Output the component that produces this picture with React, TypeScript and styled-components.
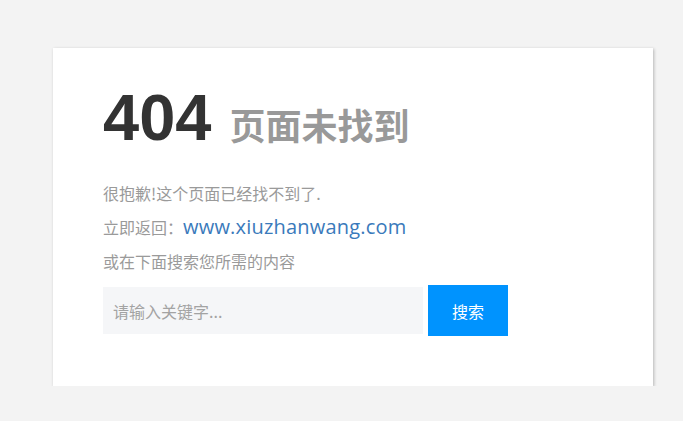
import React, { FC, useState } from "react";
import styled, { createGlobalStyle } from "styled-components";

const GlobalStyle = createGlobalStyle`
  html, body {
    margin: 0;
    padding: 0;
    background: #f3f3f3;
  }
  body {
    font-family: "Noto Sans CJK SC", "Liberation Sans", sans-serif;
  }
`;

const Page = styled.div`
  padding: 48px 0 0 53px;
`;

const Card = styled.div`
  width: 600px;
  height: 338px;
  box-sizing: border-box;
  padding: 38px 50px 0;
  background: #fff;
  box-shadow: 1px 1px 3px rgba(0, 0, 0, 0.25);
`;

const Heading = styled.h1`
  margin: 0;
  height: 64px;
  line-height: 64px;
  font-family: "Liberation Sans", Arial, sans-serif;
  font-size: 65px;
  font-weight: bold;
  color: #333;
  white-space: nowrap;
`;

const Sub = styled.small`
  font-family: "Noto Sans CJK SC", sans-serif;
  font-size: 36px;
  font-weight: bold;
  color: #999;
`;

const Lines = styled.div`
  margin-top: 26px;
`;

const Line = styled.p`
  margin: 0;
  height: 34px;
  line-height: 34px;
  font-size: 16px;
  color: #9a9a9a;
  white-space: nowrap;
`;

const Link = styled.a`
  font-family: "Open Sans", "Liberation Sans", sans-serif;
  font-size: 20px;
  letter-spacing: 0.2px;
  color: #3a7abb;
  text-decoration: none;
`;

const SearchRow = styled.form`
  margin-top: 7px;
  display: flex;
  align-items: center;
  gap: 5px;
`;

const SearchInput = styled.input`
  width: 320px;
  height: 47px;
  box-sizing: border-box;
  border: none;
  outline: none;
  padding: 0 10px;
  background: #f5f6f8;
  font-family: "Noto Sans CJK SC", sans-serif;
  font-size: 16px;
  color: #555;
  &::placeholder {
    color: #a3a3a3;
  }
`;

const SearchButton = styled.button`
  width: 80px;
  height: 51px;
  border: none;
  background: #0093fe;
  color: #fff;
  font-family: "Noto Sans CJK SC", sans-serif;
  font-size: 16px;
  cursor: pointer;
`;

const App: FC = () => {
  const [keyword, setKeyword] = useState("");

  return (
    <>
      <GlobalStyle />
      <Page>
        <Card>
          <Heading>
            404 <Sub>页面未找到</Sub>
          </Heading>
          <Lines>
            <Line>很抱歉!这个页面已经找不到了.</Line>
            <Line>
              立即返回：<Link href="#">www.xiuzhanwang.com</Link>
            </Line>
            <Line>或在下面搜索您所需的内容</Line>
          </Lines>
          <SearchRow onSubmit={e => e.preventDefault()}>
            <SearchInput
              value={keyword}
              onChange={e => setKeyword(e.target.value)}
              placeholder="请输入关键字..."
            />
            <SearchButton type="submit">搜索</SearchButton>
          </SearchRow>
        </Card>
      </Page>
    </>
  );
};

export default App;
